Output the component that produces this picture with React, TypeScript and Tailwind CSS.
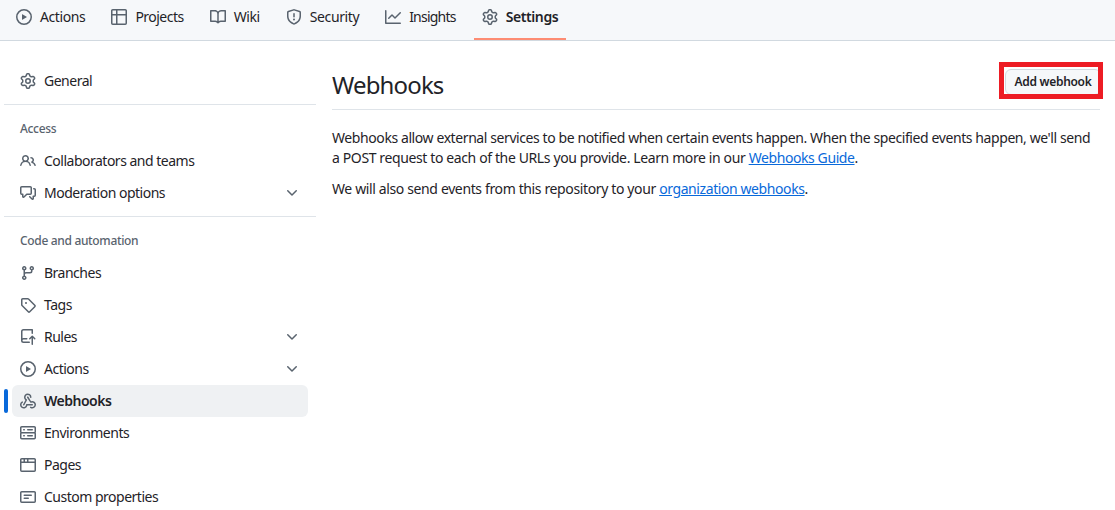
const paths: Record<string, string[]> = {
  play: ["M8 0a8 8 0 1 1 0 16A8 8 0 0 1 8 0ZM1.5 8a6.5 6.5 0 1 0 13 0 6.5 6.5 0 0 0-13 0Zm4.879-2.773 4.264 2.559a.25.25 0 0 1 0 .428l-4.264 2.559A.25.25 0 0 1 6 10.559V5.442a.25.25 0 0 1 .379-.215Z"],
  table: ["M0 1.75C0 .784.784 0 1.75 0h12.5C15.216 0 16 .784 16 1.75v12.5A1.75 1.75 0 0 1 14.25 16H1.75A1.75 1.75 0 0 1 0 14.25ZM6.5 6.5v8h7.75a.25.25 0 0 0 .25-.25V6.5Zm8-1.5V1.75a.25.25 0 0 0-.25-.25H6.5V5Zm-13 1.5v7.75c0 .138.112.25.25.25H5v-8ZM5 5V1.5H1.75a.25.25 0 0 0-.25.25V5Z"],
  book: ["M0 1.75A.75.75 0 0 1 .75 1h4.253c1.227 0 2.317.59 3 1.501A3.743 3.743 0 0 1 11.006 1h4.245a.75.75 0 0 1 .75.75v10.5a.75.75 0 0 1-.75.75h-4.507a2.25 2.25 0 0 0-1.591.659l-.622.621a.75.75 0 0 1-1.06 0l-.622-.621A2.25 2.25 0 0 0 5.258 13H.75a.75.75 0 0 1-.75-.75Zm7.251 10.324.004-5.073-.002-2.253A2.25 2.25 0 0 0 5.003 2.5H1.5v9h3.757a3.75 3.75 0 0 1 1.994.574ZM8.755 4.75l-.004 7.322a3.752 3.752 0 0 1 1.992-.572H14.5v-9h-3.495a2.25 2.25 0 0 0-2.25 2.25Z"],
  shield: ["M7.467.133a1.748 1.748 0 0 1 1.066 0l5.25 1.68A1.75 1.75 0 0 1 15 3.48V7c0 1.566-.32 3.182-1.303 4.682-.983 1.498-2.585 2.813-5.032 3.855a1.697 1.697 0 0 1-1.33 0c-2.447-1.042-4.049-2.357-5.032-3.855C1.32 10.182 1 8.566 1 7V3.48a1.75 1.75 0 0 1 1.217-1.667Zm.61 1.429a.25.25 0 0 0-.153 0l-5.25 1.68a.25.25 0 0 0-.174.238V7c0 1.358.275 2.666 1.057 3.86.784 1.194 2.121 2.34 4.366 3.297a.196.196 0 0 0 .154 0c2.245-.956 3.582-2.104 4.366-3.298C13.225 9.666 13.5 8.36 13.5 7V3.48a.251.251 0 0 0-.174-.237l-5.25-1.68ZM8.75 4.75v3a.75.75 0 0 1-1.5 0v-3a.75.75 0 0 1 1.5 0ZM9 10.5a1 1 0 1 1-2 0 1 1 0 0 1 2 0Z"],
  graph: ["M1.5 1.75V13.5h13.75a.75.75 0 0 1 0 1.5H.75a.75.75 0 0 1-.75-.75V1.75a.75.75 0 0 1 1.5 0Zm14.28 2.53-5.25 5.25a.75.75 0 0 1-1.06 0L7 7.06 4.28 9.78a.751.751 0 0 1-1.042-.018.751.751 0 0 1-.018-1.042l3.25-3.25a.75.75 0 0 1 1.06 0L10 7.94l4.72-4.72a.751.751 0 0 1 1.042.018.751.751 0 0 1 .018 1.042Z"],
  gear: ["M8 0a8.2 8.2 0 0 1 .701.031C9.444.095 9.99.645 10.16 1.29l.288 1.107c.018.066.079.158.212.224.231.114.454.243.668.386.123.082.233.09.299.071l1.103-.303c.644-.176 1.392.021 1.82.63.27.385.506.792.704 1.218.315.675.111 1.422-.364 1.891l-.814.806c-.049.048-.098.147-.088.294.016.257.016.515 0 .772-.01.147.038.246.088.294l.814.806c.475.469.679 1.216.364 1.891a7.977 7.977 0 0 1-.704 1.217c-.428.61-1.176.807-1.82.63l-1.102-.302c-.067-.019-.177-.011-.3.071a5.909 5.909 0 0 1-.668.386c-.133.066-.194.158-.211.224l-.29 1.106c-.168.646-.715 1.196-1.458 1.26a8.006 8.006 0 0 1-1.402 0c-.743-.064-1.289-.614-1.458-1.26l-.289-1.106c-.018-.066-.079-.158-.212-.224a5.738 5.738 0 0 1-.668-.386c-.123-.082-.233-.09-.299-.071l-1.103.303c-.644.176-1.392-.021-1.82-.63a8.12 8.12 0 0 1-.704-1.218c-.315-.675-.111-1.422.363-1.891l.815-.806c.05-.048.098-.147.088-.294a6.214 6.214 0 0 1 0-.772c.01-.147-.038-.246-.088-.294l-.815-.806C.635 6.045.431 5.298.746 4.623a7.92 7.92 0 0 1 .704-1.217c.428-.61 1.176-.807 1.82-.63l1.102.302c.067.019.177.011.3-.071.214-.143.437-.272.668-.386.133-.066.194-.158.211-.224l.29-1.106C6.009.645 6.556.095 7.299.03 7.53.01 7.764 0 8 0Zm-.571 1.525c-.036.003-.108.036-.137.146l-.289 1.105c-.147.561-.549.967-.998 1.189-.173.086-.34.183-.5.29-.417.278-.97.423-1.529.27l-1.103-.303c-.109-.03-.175.016-.195.045-.22.312-.412.644-.573.99-.014.031-.021.11.059.19l.815.806c.411.406.562.957.53 1.456a4.709 4.709 0 0 0 0 .582c.032.499-.119 1.05-.53 1.456l-.815.806c-.081.08-.073.159-.059.19.162.346.353.677.573.989.02.03.085.076.195.046l1.102-.303c.56-.153 1.113-.008 1.53.27.161.107.328.204.501.29.447.222.85.629.997 1.189l.289 1.105c.029.109.101.143.137.146a6.6 6.6 0 0 0 1.142 0c.036-.003.108-.036.137-.146l.289-1.105c.147-.561.549-.967.998-1.189.173-.086.34-.183.5-.29.417-.278.97-.423 1.529-.27l1.103.303c.109.029.175-.016.195-.045.22-.313.411-.644.573-.99.014-.031.021-.11-.059-.19l-.815-.806c-.411-.406-.562-.957-.53-1.456a4.709 4.709 0 0 0 0-.582c-.032-.499.119-1.05.53-1.456l.815-.806c.081-.08.073-.159.059-.19a6.464 6.464 0 0 0-.573-.989c-.02-.03-.085-.076-.195-.046l-1.102.303c-.56.153-1.113.008-1.53-.27a4.44 4.44 0 0 0-.501-.29c-.447-.222-.85-.629-.997-1.189l-.289-1.105c-.029-.11-.101-.143-.137-.146a6.6 6.6 0 0 0-1.142 0ZM11 8a3 3 0 1 1-6 0 3 3 0 0 1 6 0ZM9.5 8a1.5 1.5 0 1 0-3.001.001A1.5 1.5 0 0 0 9.5 8Z"],
  people: ["M2 5.5a3.5 3.5 0 1 1 5.898 2.549 5.508 5.508 0 0 1 3.034 4.084.75.75 0 1 1-1.482.235 4 4 0 0 0-7.9 0 .75.75 0 0 1-1.482-.236A5.507 5.507 0 0 1 3.102 8.05 3.493 3.493 0 0 1 2 5.5ZM11 4a3.001 3.001 0 0 1 2.22 5.018 5.01 5.01 0 0 1 2.56 3.012.749.749 0 0 1-.885.954.752.752 0 0 1-.549-.514 3.507 3.507 0 0 0-2.522-2.372.75.75 0 0 1-.574-.73v-.352a.75.75 0 0 1 .416-.672A1.5 1.5 0 0 0 11 5.5.75.75 0 0 1 11 4Zm-5.5-.5a2 2 0 1 0-.001 3.999A2 2 0 0 0 5.5 3.5Z"],
  comment: ["M1.75 1h8.5c.966 0 1.75.784 1.75 1.75v5.5A1.75 1.75 0 0 1 10.25 10H7.061l-2.574 2.573A1.458 1.458 0 0 1 2 11.543V10h-.25A1.75 1.75 0 0 1 0 8.25v-5.5C0 1.784.784 1 1.75 1ZM1.5 2.75v5.5c0 .138.112.25.25.25h1a.75.75 0 0 1 .75.75v2.19l2.72-2.72a.749.749 0 0 1 .53-.22h3.5a.25.25 0 0 0 .25-.25v-5.5a.25.25 0 0 0-.25-.25h-8.5a.25.25 0 0 0-.25.25Zm13 2a.25.25 0 0 0-.25-.25h-.5a.75.75 0 0 1 0-1.5h.5c.966 0 1.75.784 1.75 1.75v5.5A1.75 1.75 0 0 1 14.25 12H14v1.543a1.458 1.458 0 0 1-2.487 1.03L9.22 12.28a.749.749 0 0 1 .326-1.275.749.749 0 0 1 .734.215l2.22 2.22v-2.19a.75.75 0 0 1 .75-.75h1a.25.25 0 0 0 .25-.25Z"],
  branch: ["M9.5 3.25a2.25 2.25 0 1 1 3 2.122V6A2.5 2.5 0 0 1 10 8.5H6a1 1 0 0 0-1 1v1.128a2.251 2.251 0 1 1-1.5 0V5.372a2.25 2.25 0 1 1 1.5 0v1.836A2.493 2.493 0 0 1 6 7h4a1 1 0 0 0 1-1v-.628A2.25 2.25 0 0 1 9.5 3.25Zm-6 0a.75.75 0 1 0 1.5 0 .75.75 0 0 0-1.5 0Zm8.25-.75a.75.75 0 1 0 0 1.5.75.75 0 0 0 0-1.5ZM4.25 12a.75.75 0 1 0 0 1.5.75.75 0 0 0 0-1.5Z"],
  tag: ["M1 7.775V2.75C1 1.784 1.784 1 2.75 1h5.025c.464 0 .91.184 1.238.513l6.25 6.25a1.75 1.75 0 0 1 0 2.474l-5.026 5.026a1.75 1.75 0 0 1-2.474 0l-6.25-6.25A1.752 1.752 0 0 1 1 7.775Zm1.5 0c0 .066.026.13.073.177l6.25 6.25a.25.25 0 0 0 .354 0l5.025-5.025a.25.25 0 0 0 0-.354l-6.25-6.25a.25.25 0 0 0-.177-.073H2.75a.25.25 0 0 0-.25.25ZM6 5a1 1 0 1 1 0 2 1 1 0 0 1 0-2Z"],
  repoPush: ["M1 2.5A2.5 2.5 0 0 1 3.5 0h8.75a.75.75 0 0 1 .75.75v3.5a.75.75 0 0 1-1.5 0V1.5h-8a1 1 0 0 0-1 1v6.708A2.493 2.493 0 0 1 3.5 9h3.25a.75.75 0 0 1 0 1.5H3.5a1 1 0 0 0 0 2h5.75a.75.75 0 0 1 0 1.5H3.5A2.5 2.5 0 0 1 1 11.5Zm13.23 7.79h-.001l-1.224-1.224v6.184a.75.75 0 0 1-1.5 0V9.066L10.28 10.29a.75.75 0 0 1-1.06-1.061l2.505-2.504a.75.75 0 0 1 1.06 0L15.29 9.23a.751.751 0 0 1-.018 1.042.751.751 0 0 1-1.042.018Z"],
  webhook: [
    "M5.5 4.25a2.25 2.25 0 0 1 4.5 0 .75.75 0 0 0 1.5 0 3.75 3.75 0 1 0-6.14 2.889l-2.272 4.258a.75.75 0 0 0 1.324.706L7 7.25a.75.75 0 0 0-.309-1.015A2.25 2.25 0 0 1 5.5 4.25Z",
    "M7.364 3.607a.75.75 0 0 1 1.03.257l2.608 4.349a3.75 3.75 0 1 1-.628 6.785.75.75 0 0 1 .64-1.357 2.25 2.25 0 1 0 .306-3.92.75.75 0 0 1-1.038-.252L7.107 4.636a.75.75 0 0 1 .257-1.03Z",
    "M2.9 8.776A.75.75 0 0 1 2.625 9.8 2.25 2.25 0 1 0 6 11.75a.75.75 0 0 1 .75-.751h5.5a.75.75 0 0 1 0 1.5H7.425a3.751 3.751 0 1 1-5.55-3.998.75.75 0 0 1 1.024.274Z",
  ],
  server: ["M1.75 1h12.5c.966 0 1.75.784 1.75 1.75v4c0 .372-.116.717-.314 1 .198.283.314.628.314 1v4a1.75 1.75 0 0 1-1.75 1.75H1.75A1.75 1.75 0 0 1 0 12.75v-4c0-.358.109-.707.314-1a1.739 1.739 0 0 1-.314-1v-4C0 1.784.784 1 1.75 1ZM1.5 2.75v4c0 .138.112.25.25.25h12.5a.25.25 0 0 0 .25-.25v-4a.25.25 0 0 0-.25-.25H1.75a.25.25 0 0 0-.25.25Zm.25 5.75a.25.25 0 0 0-.25.25v4c0 .138.112.25.25.25h12.5a.25.25 0 0 0 .25-.25v-4a.25.25 0 0 0-.25-.25ZM7 4.75A.75.75 0 0 1 7.75 4h4.5a.75.75 0 0 1 0 1.5h-4.5A.75.75 0 0 1 7 4.75ZM7.75 10h4.5a.75.75 0 0 1 0 1.5h-4.5a.75.75 0 0 1 0-1.5ZM3 4.75A.75.75 0 0 1 3.75 4h.5a.75.75 0 0 1 0 1.5h-.5A.75.75 0 0 1 3 4.75ZM3.75 10h.5a.75.75 0 0 1 0 1.5h-.5a.75.75 0 0 1 0-1.5Z"],
  browser: ["M0 2.75C0 1.784.784 1 1.75 1h12.5c.966 0 1.75.784 1.75 1.75v10.5A1.75 1.75 0 0 1 14.25 15H1.75A1.75 1.75 0 0 1 0 13.25ZM14.5 6h-13v7.25c0 .138.112.25.25.25h12.5a.25.25 0 0 0 .25-.25Zm-6-3.5v2h6V2.75a.25.25 0 0 0-.25-.25ZM5 2.5v2h2v-2Zm-3.25 0a.25.25 0 0 0-.25.25V4.5h2v-2Z"],
  note: ["M0 3.75C0 2.784.784 2 1.75 2h12.5c.966 0 1.75.784 1.75 1.75v8.5A1.75 1.75 0 0 1 14.25 14H1.75A1.75 1.75 0 0 1 0 12.25Zm1.75-.25a.25.25 0 0 0-.25.25v8.5c0 .138.112.25.25.25h12.5a.25.25 0 0 0 .25-.25v-8.5a.25.25 0 0 0-.25-.25ZM3.5 6.25a.75.75 0 0 1 .75-.75h7a.75.75 0 0 1 0 1.5h-7a.75.75 0 0 1-.75-.75Zm.75 2.25h4a.75.75 0 0 1 0 1.5h-4a.75.75 0 0 1 0-1.5Z"],
  chevron: ["M12.78 5.22a.749.749 0 0 1 0 1.06l-4.25 4.25a.749.749 0 0 1-1.06 0L3.22 6.28a.749.749 0 1 1 1.06-1.06L8 8.939l3.72-3.719a.749.749 0 0 1 1.06 0Z"],
};

function Icon({ name }: { name: string }) {
  return (
    <svg width={16} height={16} viewBox="0 0 16 16" fill="currentColor" className="shrink-0 text-[#59636e]">
      {paths[name].map((d) => (
        <path key={d} d={d} />
      ))}
    </svg>
  );
}

const tabs = [
  { label: "Actions", icon: "play", tracking: "tracking-[-0.4px]" },
  { label: "Projects", icon: "table", tracking: "tracking-[-0.52px]" },
  { label: "Wiki", icon: "book", tracking: "tracking-[-0.4px]" },
  { label: "Security", icon: "shield", tracking: "tracking-[-0.4px]" },
  { label: "Insights", icon: "graph", tracking: "tracking-[-0.78px]" },
  { label: "Settings", icon: "gear", tracking: "tracking-[-0.4px]", active: true },
];

function SideItem({
  icon,
  label,
  chevron,
  active,
}: {
  icon: string;
  label: string;
  chevron?: boolean;
  active?: boolean;
}) {
  return (
    <div
      className={`relative mx-2 flex h-8 items-center gap-2 rounded-md px-2 ${active ? "bg-[#eff1f3] font-semibold" : ""}`}
    >
      {active && <span className="absolute -left-2 top-1 h-6 w-1 rounded-md bg-[#0969da]" />}
      <Icon name={icon} />
      <span className="flex-1 tracking-[-0.5px]">{label}</span>
      {chevron && <Icon name="chevron" />}
    </div>
  );
}

function SideHeading({ children }: { children: string }) {
  return (
    <div className="flex h-8 items-center px-4 text-xs font-medium tracking-[-0.33px] text-[#59636e]">
      {children}
    </div>
  );
}

export default function App() {
  return (
    <div className="h-[510px] w-[1115px] overflow-hidden bg-white font-['Noto_Sans',sans-serif] text-sm text-[#1f2328]">
      <nav className="flex h-[41px] gap-2.5 border-b border-[#d1d9e0] bg-[#f6f8fa] pl-2">
        {tabs.map(({ label, icon, tracking, active }) => (
          <div
            key={label}
            className={`relative flex h-10 items-center gap-2 px-2 pb-1.5 ${active ? "font-semibold" : ""}`}
          >
            <Icon name={icon} />
            <span className={tracking}>{label}</span>
            {active && <span className="absolute inset-x-0 bottom-0 h-0.5 bg-[#fd8c73]" />}
          </div>
        ))}
      </nav>

      <div className="flex pl-1">
        <aside className="w-[312px] shrink-0 pt-6">
          <SideItem icon="gear" label="General" />
          <div className="mt-[7px] border-t border-[#d1d9e0b3]" />
          <div className="mt-2">
            <SideHeading>Access</SideHeading>
            <SideItem icon="people" label="Collaborators and teams" />
            <SideItem icon="comment" label="Moderation options" chevron />
          </div>
          <div className="mt-[7px] border-t border-[#d1d9e0b3]" />
          <div className="mt-2">
            <SideHeading>Code and automation</SideHeading>
            <SideItem icon="branch" label="Branches" />
            <SideItem icon="tag" label="Tags" />
            <SideItem icon="repoPush" label="Rules" chevron />
            <SideItem icon="play" label="Actions" chevron />
            <SideItem icon="webhook" label="Webhooks" active />
            <SideItem icon="server" label="Environments" />
            <SideItem icon="browser" label="Pages" />
            <SideItem icon="note" label="Custom properties" />
          </div>
        </aside>

        <main className="ml-4 w-[768px] pt-[26px]">
          <div className="flex h-[43px] items-start justify-between border-b border-[#d1d9e0b3]">
            <h1 className="text-2xl leading-9 tracking-[-0.85px]">Webhooks</h1>
            <div className="-mr-[3px] -mt-[5px] h-[37px] w-[104px] overflow-hidden border-[5px] border-[#ed1c24]">
              <button className="ml-px mt-0.5 h-[26px] w-24 rounded-md border border-[#d1d9e0] bg-[#f6f8fa] text-xs font-semibold tracking-[-0.3px]">
                Add webhook
              </button>
            </div>
          </div>
          <p className="mt-[18px] whitespace-nowrap leading-5 tracking-[-0.41px]">
            Webhooks allow external services to be notified when certain events happen. When the specified events happen, we'll send
            <br />
            <span className="tracking-[-0.38px]">a POST request to each of the URLs you provide. Learn more in our </span>
            <a className="text-[#0969da] underline">Webhooks Guide</a>.
          </p>
          <p className="mt-[11px] whitespace-nowrap leading-5 tracking-[-0.41px]">
            <span className="tracking-[-0.37px]">We will also send events from this repository to your </span>
            <a className="text-[#0969da] underline">organization webhooks</a>.
          </p>
        </main>
      </div>
    </div>
  );
}
